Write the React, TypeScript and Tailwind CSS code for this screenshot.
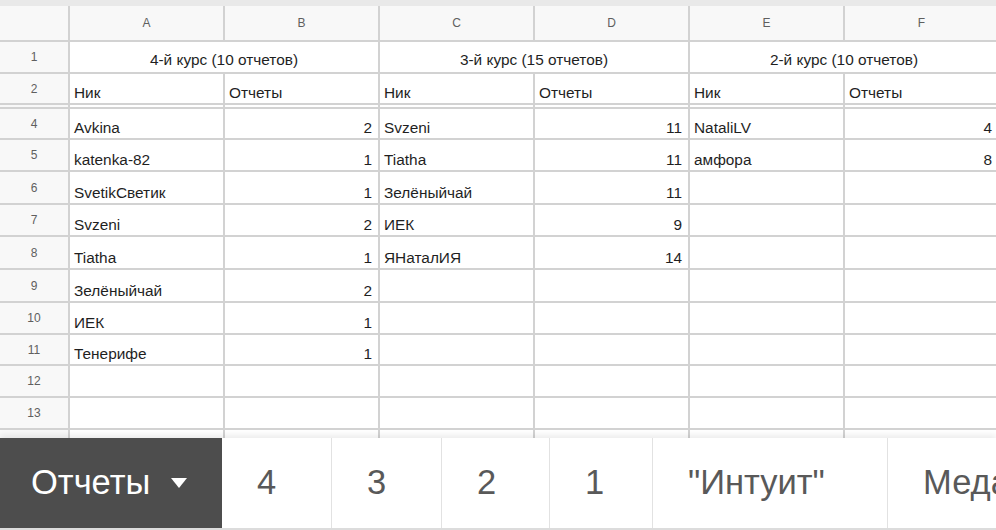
import React from 'react';

type Row = { n: number | null; cells: (string | number)[] };

// rows 4..13 data: [A, B, C, D, E, F]
const data: Row[] = [
  { n: 4, cells: ['Avkina', 2, 'Svzeni', 11, 'NataliLV', 4] },
  { n: 5, cells: ['katenka-82', 1, 'Tiatha', 11, 'амфора', 8] },
  { n: 6, cells: ['SvetikСветик', 1, 'Зелёныйчай', 11, '', ''] },
  { n: 7, cells: ['Svzeni', 2, 'ИЕК', 9, '', ''] },
  { n: 8, cells: ['Tiatha', 1, 'ЯНаталИЯ', 14, '', ''] },
  { n: 9, cells: ['Зелёныйчай', 2, '', '', '', ''] },
  { n: 10, cells: ['ИЕК', 1, '', '', '', ''] },
  { n: 11, cells: ['Тенерифе', 1, '', '', '', ''] },
  { n: 12, cells: ['', '', '', '', '', ''] },
  { n: 13, cells: ['', '', '', '', '', ''] },
  { n: null, cells: ['', '', '', '', '', ''] },
];

const tabs = [
  { label: '4', w: 'w-[109px]' },
  { label: '3', w: 'w-[110px]' },
  { label: '2', w: 'w-[108px]' },
  { label: '1', w: 'w-[103px]' },
  { label: '"Интуит"', w: 'w-[235px]' },
  { label: 'Медали', w: 'w-[200px]' },
];

const HeadCell: React.FC<{ children?: React.ReactNode }> = ({ children }) => (
  <div className="bg-[#f8f8f8] flex items-center justify-center text-[12px] text-[#5f5f5f]">
    {children}
  </div>
);

const Cell: React.FC<{ value: string | number }> = ({ value }) => {
  const isNum = typeof value === 'number';
  return (
    <div
      className={`bg-white flex items-end pb-0 text-[15.4px] leading-[20px] text-[#1f1f1f] whitespace-nowrap overflow-hidden ${
        isNum ? 'justify-end pr-[6px]' : 'justify-start pl-[4px]'
      }`}
    >
      {value}
    </div>
  );
};

const Title: React.FC<{ children: React.ReactNode }> = ({ children }) => (
  <div className="col-span-2 bg-white flex items-end justify-center pb-[2px] text-[15.4px] leading-[20px] text-[#1f1f1f]">
    {children}
  </div>
);

export default function App() {
  return (
    <div
      className="w-[996px] h-[530px] overflow-hidden flex flex-col bg-white"
      style={{ fontFamily: '"Liberation Sans", Arial, sans-serif' }}
    >
      {/* top strip */}
      <div className="h-[6px] bg-[#e9e9e9] shrink-0" />

      {/* sheet grid */}
      <div className="flex-1 overflow-hidden bg-[#d2d2d2]">
        <div className="grid grid-cols-[68px_153px_153px_153px_153px_153px_153px] grid-rows-[34px_30px_29px_2px_29px_30px_31px_30px_31px_31px_30px_29px_30px_30px_20px] gap-[2px]">
          {/* column letters */}
          <HeadCell />
          {['A', 'B', 'C', 'D', 'E', 'F'].map((c) => (
            <HeadCell key={c}>{c}</HeadCell>
          ))}

          {/* row 1: merged titles */}
          <HeadCell>1</HeadCell>
          <Title>4-й курс (10 отчетов)</Title>
          <Title>3-й курс (15 отчетов)</Title>
          <Title>2-й курс (10 отчетов)</Title>

          {/* row 2 */}
          <HeadCell>2</HeadCell>
          {['Ник', 'Отчеты', 'Ник', 'Отчеты', 'Ник', 'Отчеты'].map((t, i) => (
            <Cell key={i} value={t} />
          ))}

          {/* row 3 hidden */}
          <div className="bg-[#f8f8f8]" />
          {[0, 1, 2, 3, 4, 5].map((i) => (
            <div key={i} className="bg-white" />
          ))}

          {/* rows 4..14 */}
          {data.map((r, ri) => (
            <React.Fragment key={ri}>
              <HeadCell>{r.n ?? ''}</HeadCell>
              {r.cells.map((v, ci) => (
                <Cell key={ci} value={v} />
              ))}
            </React.Fragment>
          ))}
        </div>
      </div>

      {/* sheet tabs */}
      <div className="h-[92px] shrink-0 flex bg-white border-b-2 border-[#dcdcdc] shadow-[0_-3px_6px_rgba(0,0,0,0.08)] relative">
        <div className="w-[222px] bg-[#4d4d4d] flex items-center pl-[31px] text-white text-[34.5px] shrink-0">
          <span>Отчеты</span>
          <svg className="ml-[21px]" width="16" height="10" viewBox="0 0 16 10">
            <path d="M0 0 L16 0 L8 10 Z" fill="white" />
          </svg>
        </div>
        {tabs.map((t, i) => (
          <div
            key={t.label}
            className={`${t.w} shrink-0 flex items-center pl-[35px] text-[34.5px] text-[#595959] whitespace-nowrap ${
              i > 0 ? 'border-l border-[#e2e2e2]' : ''
            }`}
          >
            {t.label}
          </div>
        ))}
      </div>
    </div>
  );
}
